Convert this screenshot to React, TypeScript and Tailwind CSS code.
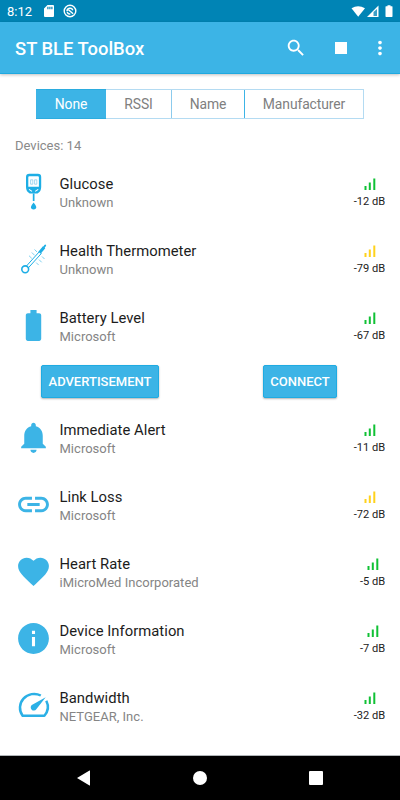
import type { ReactNode } from "react";

type Device = {
  name: string;
  vendor: string;
  rssi: number;
  icon: ReactNode;
  open?: boolean;
};

const GlucoseIcon = () => (
  <svg viewBox="0 0 37 37" className="size-[37px]" fill="#1eaee5">
    <path
      fillRule="evenodd"
      d="M14.300 .800h8.600q3.300 0 3.300 3.200v10q0 4.500-3.700 6.500h-7.800q-3.700-2-3.700-6.500V4q0-3.200 3.300-3.200zM14.300 3.200q-1 0-1 1v9.600h10.600V4.200q0-1-1-1z"
    />
    <path d="M14 16.400l3 2M23.200 16.400l-3 2" stroke="#fff" strokeWidth="1.100" />
    <path d="M17.800 20.500h1.700v7.500h-1.700zM18.600 29.500q2.700 3.200 2.700 4.600a2.700 2.400 0 0 1-5.400 0q0-1.400 2.700-4.600z" />
    <path d="M15.600 6.800h2.200v4.400h-2.200zM19.600 6.800h2.200v4.400h-2.200z" fill="none" stroke="#8ccdec" strokeWidth=".8" />
  </svg>
);

const ThermometerIcon = () => (
  <svg viewBox="0 0 37 37" className="size-[37px]" fill="none" stroke="#1eaee5">
    <circle cx="10.200" cy="29.300" r="3.400" strokeWidth="1.600" />
    <path d="M11.300 26.200L24.500 11.500M13.200 28L26.500 13.300" strokeWidth="1" />
    <path d="M24.500 12.800l4.600-5.600" strokeWidth="3" />
    <path d="M28 8.500l2.200-3" strokeWidth="1.900" strokeLinecap="round" />
    <path
      d="M19.500 9.500l2.600 2.500M16.800 12.500l2.800 2.800M14 15.700l2.800 2.700M27 16.500l2.500 2.500M24 19.600l2.700 2.700M21.200 22.600l2.500 2.500"
      strokeWidth=".9"
      opacity=".65"
    />
  </svg>
);

const MaterialIcon = ({ d }: { d: string }) => (
  <svg viewBox="0 0 24 24" className="size-[37px]" fill="#3cb4e6">
    <path d={d} />
  </svg>
);

const GaugeIcon = () => (
  <svg viewBox="0 0 37 37" className="size-[37px]" fill="none" stroke="#2bb0e6">
    <path d="M25.800 8.500A14.200 13.800 0 0 0 7.600 28.700H29.400A14.200 13.800 0 0 0 31.300 13.800" strokeWidth="2.500" strokeLinejoin="round" />
    <path d="M30.700 10.300L21.300 22.200a3.100 3.100 0 1 1-4.500-4.200z" fill="#2bb0e6" stroke="none" />
  </svg>
);

const devices: Device[] = [
  { name: "Glucose", vendor: "Unknown", rssi: -12, icon: <GlucoseIcon /> },
  { name: "Health Thermometer", vendor: "Unknown", rssi: -79, icon: <ThermometerIcon /> },
  {
    name: "Battery Level",
    vendor: "Microsoft",
    rssi: -67,
    open: true,
    icon: (
      <MaterialIcon d="M15.670 4H14V2h-4v2H8.330C7.600 4 7 4.600 7 5.330v15.330C7 21.400 7.600 22 8.330 22h7.330c.740 0 1.340-.600 1.340-1.330V5.330C17 4.600 16.400 4 15.670 4z" />
    ),
  },
  {
    name: "Immediate Alert",
    vendor: "Microsoft",
    rssi: -11,
    icon: (
      <MaterialIcon d="M12 22c1.100 0 2-.900 2-2h-4c0 1.100.890 2 2 2zm6-6v-5c0-3.070-1.640-5.640-4.500-6.320V4c0-.830-.670-1.500-1.500-1.500s-1.500.670-1.500 1.500v.680C7.630 5.360 6 7.920 6 11v5l-2 2v1h16v-1l-2-2z" />
    ),
  },
  {
    name: "Link Loss",
    vendor: "Microsoft",
    rssi: -72,
    icon: (
      <MaterialIcon d="M3.900 12c0-1.710 1.390-3.100 3.100-3.100h4V7H7c-2.760 0-5 2.240-5 5s2.240 5 5 5h4v-1.900H7c-1.710 0-3.100-1.390-3.100-3.100zM8 13h8v-2H8v2zm9-6h-4v1.900h4c1.710 0 3.100 1.390 3.100 3.100s-1.390 3.100-3.100 3.100h-4V17h4c2.760 0 5-2.240 5-5s-2.240-5-5-5z" />
    ),
  },
  {
    name: "Heart Rate",
    vendor: "iMicroMed Incorporated",
    rssi: -5,
    icon: (
      <MaterialIcon d="M12 21.350l-1.450-1.320C5.400 15.360 2 12.280 2 8.500 2 5.420 4.420 3 7.500 3c1.740 0 3.410.810 4.500 2.090C13.090 3.810 14.760 3 16.500 3 19.580 3 22 5.420 22 8.500c0 3.780-3.400 6.860-8.550 11.540L12 21.350z" />
    ),
  },
  {
    name: "Device Information",
    vendor: "Microsoft",
    rssi: -7,
    icon: (
      <MaterialIcon d="M12 2C6.480 2 2 6.480 2 12s4.480 10 10 10 10-4.480 10-10S17.520 2 12 2zm1 15h-2v-6h2v6zm0-8h-2V7h2v2z" />
    ),
  },
  { name: "Bandwidth", vendor: "NETGEAR, Inc.", rssi: -32, icon: <GaugeIcon /> },
];

function StatusBar() {
  return (
    <div className="flex h-[22px] items-center bg-[#0084b5] px-[7px] text-[13px] text-white">
      <span className="pt-px">8:12</span>
      <svg viewBox="0 0 10 12" className="ml-3 h-3 w-2.5" fill="#fff">
        <path fillRule="evenodd" d="M3.500 0H9q1 0 1 1v10q0 1-1 1H1q-1 0-1-1V3.500zM3.300 1.800v2.400h1.200V1.800zM5.300 1.800v2.400h1.200V1.800zM7.300 1.800v2.400h1.200V1.800z" />
      </svg>
      <svg viewBox="0 0 14 14" className="ml-[9px] size-3.5" fill="none" stroke="#fff">
        <circle cx="7" cy="7" r="5.800" strokeWidth="1.400" />
        <path d="M4 7.300A3 3 0 0 1 9.800 6.200M7.300 10.100A3 3 0 0 1 4.200 8M5.500 5.800l4.600 4" strokeWidth="1.500" />
      </svg>
      <svg viewBox="0 0 42 14" className="ml-auto h-3.5 w-[42px]" fill="#fff">
        <path d="M.500 4.300Q7 .200 14 4.300L7.200 12.800z" />
        <path d="M27.500 1.500V13H16z" />
        <path d="M22.500 8v4h3.500V5z" fill="#3d9fc7" />
        <path d="M36.500 1.200h3v1H41q.500 0 .500.600v9.500q0 .700-.600.700h-5.800q-.600 0-.600-.700V2.800q0-.600.500-.600h1.500z" />
      </svg>
    </div>
  );
}

function AppBar() {
  return (
    <header className="flex h-[52px] items-center border-b border-[#1fa9e0] bg-[#3cb4e6] pr-[9px] pl-[15px] shadow-[0_1px_3px_rgba(0,0,0,0.25)]">
      <h1 className="pt-[3px] text-[18.400px] font-medium text-white">ST BLE ToolBox</h1>
      <svg viewBox="0 0 24 24" className="ml-auto size-[22px]" fill="#fff">
        <path d="M15.500 14h-.790l-.280-.270C15.410 12.590 16 11.110 16 9.500 16 5.910 13.090 3 9.500 3S3 5.910 3 9.500 5.910 16 9.500 16c1.610 0 3.090-.590 4.230-1.570l.270.280v.790l5 4.990L20.490 19l-4.990-5zm-6 0C7.010 14 5 11.990 5 9.500S7.010 5 9.500 5 14 7.010 14 9.500 11.990 14 9.500 14z" />
      </svg>
      <div className="ml-7 size-3 bg-white" />
      <svg viewBox="0 0 24 24" className="ml-[22px] size-[22px]" fill="#fff">
        <path d="M12 8c1.100 0 2-.900 2-2s-.900-2-2-2-2 .900-2 2 .900 2 2 2zm0 2c-1.100 0-2 .900-2 2s.900 2 2 2 2-.900 2-2-.900-2-2-2zm0 6c-1.100 0-2 .900-2 2s.900 2 2 2 2-.900 2-2-.900-2-2-2z" />
      </svg>
    </header>
  );
}

function SortTabs() {
  return (
    <div className="mx-auto mt-[15px] flex h-[30px] w-[328px] border border-[#b4dbf2] text-[13.900px] tracking-[-0.100px] text-[#808080]">
      <button className="-my-px -ml-px w-[70px] border-y border-[#2bacdf] bg-[#3cb4e6] text-white">None</button>
      <button className="w-[65px]">RSSI</button>
      <button className="w-[73px] border-l border-[#8ccbed]">Name</button>
      <button className="flex-1 border-l border-[#3cb4e6]">Manufacturer</button>
    </div>
  );
}

function Signal({ rssi }: { rssi: number }) {
  return (
    <div className="flex flex-col items-center pt-[3px]">
      <svg viewBox="0 0 12 12" className="ml-px h-3 w-3" fill={rssi < -70 ? "#ffd21c" : "#10c135"}>
        <path d="M.500 8h2v4h-2zM4.800 4.500h2V12h-2zM9.300 .500h2V12h-2z" />
      </svg>
      <span className="mt-[5px] text-[11.100px] leading-[13px] tracking-[-0.050px] text-[#222]">{rssi} dB</span>
    </div>
  );
}

function DeviceRow({ device }: { device: Device }) {
  return (
    <li>
      <div className="flex h-[67px] items-center pr-[15px] pl-[14.500px]">
        {device.icon}
        <div className="ml-2 flex-1 pt-1">
          <div className="text-[14.800px] leading-[18px] tracking-[0.040px] text-[#1c1c1c]">{device.name}</div>
          <div className="text-[13px] leading-[19px] tracking-[0.020px] text-[#858585]">{device.vendor}</div>
        </div>
        <Signal rssi={device.rssi} />
      </div>
      {device.open && (
        <div className="flex h-[45px] justify-between pt-[6.500px] pr-[63px] pl-[41px] text-[13px] font-medium text-white">
          <button className="h-[33px] w-[118px] rounded-xs border border-[#1fabe2] bg-[#3cb4e6] shadow-[0_1px_2px_rgba(0,0,0,0.3)]">
            ADVERTISEMENT
          </button>
          <button className="h-[33px] w-[74px] rounded-xs border border-[#1fabe2] bg-[#3cb4e6] shadow-[0_1px_2px_rgba(0,0,0,0.3)]">
            CONNECT
          </button>
        </div>
      )}
    </li>
  );
}

function NavBar() {
  return (
    <nav className="flex h-[45px] items-center justify-between border-t border-[#b0b5b8] bg-black px-[77px]">
      <svg viewBox="0 0 14 16" className="h-4 w-3.5" fill="#fff">
        <path d="M0 8L12.500 .500q.500-.300.500.300v14.400q0 .600-.500.300z" />
      </svg>
      <div className="size-3.5 rounded-full bg-white" />
      <div className="size-3.5 rounded-[1px] bg-white" />
    </nav>
  );
}

export default function App() {
  return (
    <div className="flex h-[800px] w-[400px] flex-col overflow-hidden bg-white font-['Roboto',sans-serif]">
      <StatusBar />
      <AppBar />

      {/* Device list */}
      <main className="flex-1">
        <SortTabs />
        <p className="mt-[18px] pl-[15px] text-[13px] leading-[18px] text-[#8a8a8a]">Devices: 14</p>
        <ul className="mt-[2.500px]">
          {devices.map((device) => (
            <DeviceRow key={device.name} device={device} />
          ))}
        </ul>
      </main>

      <NavBar />
    </div>
  );
}
